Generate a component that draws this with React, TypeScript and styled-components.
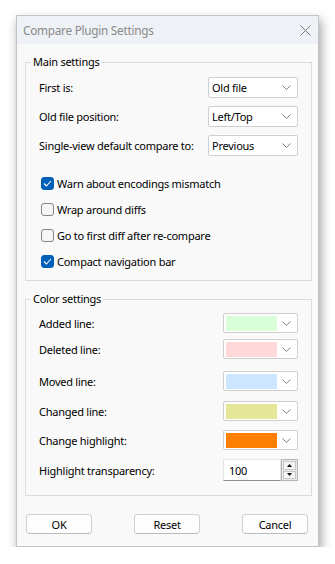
import React from "react";
import styled, { createGlobalStyle } from "styled-components";

const GlobalStyle = createGlobalStyle`
  body {
    margin: 0;
    background: #ffffff;
    font-family: "Segoe UI", "Noto Sans", sans-serif;
    font-size: 11px;
    letter-spacing: -0.25px;
    color: #000000;
  }
`;

const Dialog = styled.div`
  margin: 15px 0 0 16px;
  width: 303px;
  box-sizing: border-box;
  border: 1px solid #c4c4c4;
  background: #f9f9f9;
  box-shadow: 2px 5px 10px rgba(0, 0, 0, 0.38);
  display: flex;
  flex-direction: column;
`;

const TitleBar = styled.div`
  height: 28px;
  background: #eef1f5;
  display: flex;
  align-items: center;
  justify-content: space-between;
  padding: 0 6px 0 6px;
`;

const Title = styled.div`
  color: #8a8a8a;
  font-size: 11.75px;
  margin-top: -1px;
`;

const CloseButton = styled.div`
  width: 12px;
  height: 12px;
  display: flex;
  align-items: center;
  justify-content: center;
  margin-right: 1px;
`;

const Group = styled.fieldset<{ $top: number; $padTop: number; $padBottom: number }>`
  margin: ${(p) => p.$top}px 6px 0 8px;
  padding: ${(p) => p.$padTop}px 13px ${(p) => p.$padBottom}px 13px;
  border: 1px solid #dcdcdc;
  min-width: 0;
`;

const Legend = styled.legend`
  margin-left: -8px;
  padding: 0 2px;
  line-height: 16px;
  font-size: 11px;
`;

const SelectRows = styled.div`
  display: flex;
  flex-direction: column;
  gap: 8px;
`;

const Row = styled.div<{ $gap?: number; $height?: number }>`
  display: flex;
  align-items: center;
  justify-content: space-between;
  height: ${(p) => p.$height ?? 21}px;
  margin-top: ${(p) => p.$gap ?? 0}px;
`;

const Label = styled.span`
  white-space: nowrap;
`;

const Select = styled.div`
  width: 90px;
  height: 21px;
  box-sizing: border-box;
  background: #ffffff;
  border: 1px solid #cfcfcf;
  border-radius: 2px;
  display: flex;
  align-items: center;
  justify-content: space-between;
  padding: 0 6px 0 3px;
`;

const Checks = styled.div`
  display: flex;
  flex-direction: column;
  gap: 6px;
  margin-top: 17px;
`;

const CheckRow = styled.label`
  display: flex;
  align-items: center;
  gap: 3px;
  height: 20px;
  padding-left: 2px;
`;

const Box = styled.span<{ $checked: boolean }>`
  width: 13px;
  height: 13px;
  box-sizing: border-box;
  border-radius: 3px;
  display: flex;
  align-items: center;
  justify-content: center;
  background: ${(p) => (p.$checked ? "#005fb8" : "#f5f5f5")};
  border: 1px solid ${(p) => (p.$checked ? "#005fb8" : "#858585")};
`;

const ColorPicker = styled.div`
  width: 75px;
  height: 20px;
  box-sizing: border-box;
  background: #ffffff;
  border: 1px solid #cfcfcf;
  border-radius: 2px;
  display: flex;
  align-items: center;
  padding: 0 6px 0 2px;
  gap: 5px;
`;

const Swatch = styled.span<{ $color: string }>`
  width: 52px;
  height: 15px;
  background: ${(p) => p.$color};
`;

const Spin = styled.div`
  width: 75px;
  height: 22px;
  display: flex;
`;

const SpinEdit = styled.div`
  flex: 1;
  background: #ffffff;
  border: 1px solid #e6e6e6;
  border-bottom-color: #8f8f8f;
  display: flex;
  align-items: center;
  padding-left: 5px;
`;

const SpinButtons = styled.div`
  width: 17px;
  display: flex;
  flex-direction: column;
  border: 1px solid #b4b4b4;
  box-sizing: border-box;
  background: #e9e9e9;
`;

const SpinButton = styled.div<{ $down?: boolean }>`
  flex: 1;
  display: flex;
  align-items: center;
  justify-content: center;
  background: #f4f4f4;
  margin: 1px;
  margin-top: ${(p) => (p.$down ? 0 : 1)}px;
  border: 1px solid #c8c8c8;
`;

const Buttons = styled.div`
  display: flex;
  justify-content: space-between;
  padding: 18px 10px 12px 9px;
`;

const Button = styled.div`
  width: 66px;
  height: 20px;
  box-sizing: border-box;
  border: 1px solid #d0d0d0;
  border-bottom-color: #bcbcbc;
  border-radius: 4px;
  background: #fdfdfd;
  display: flex;
  align-items: center;
  justify-content: center;
`;

const Chevron = () => (
  <svg width="9" height="5" viewBox="0 0 9 5">
    <path d="M0.5 0.5 L4.5 4.5 L8.5 0.5" fill="none" stroke="#707070" strokeWidth="0.9" />
  </svg>
);

const Tick = () => (
  <svg width="9" height="7" viewBox="0 0 9 7">
    <path d="M1 3.5 L3.4 6 L8 1" fill="none" stroke="#ffffff" strokeWidth="1.1" />
  </svg>
);

const Arrow = ({ down }: { down?: boolean }) => (
  <svg width="5" height="3" viewBox="0 0 5 3">
    <path d={down ? "M0 0 H5 L2.5 3 Z" : "M0 3 H5 L2.5 0 Z"} fill="#111" />
  </svg>
);

const selects = [
  { label: "First is:", value: "Old file" },
  { label: "Old file position:", value: "Left/Top" },
  { label: "Single-view default compare to:", value: "Previous" },
];

const checks = [
  { label: "Warn about encodings mismatch", checked: true },
  { label: "Wrap around diffs", checked: false },
  { label: "Go to first diff after re-compare", checked: false },
  { label: "Compact navigation bar", checked: true },
];

const colors = [
  { label: "Added line:", color: "#d9ffd9", gap: 0 },
  { label: "Deleted line:", color: "#ffd9d9", gap: 6 },
  { label: "Moved line:", color: "#cce6ff", gap: 12 },
  { label: "Changed line:", color: "#e6e699", gap: 10 },
  { label: "Change highlight:", color: "#ff8000", gap: 9 },
];

export default function App() {
  return (
    <>
      <GlobalStyle />
      <Dialog>
        <TitleBar>
          <Title>Compare Plugin Settings</Title>
          <CloseButton>
            <svg width="11" height="11" viewBox="0 0 11 11">
              <path d="M0.5 0.5 L10.5 10.5 M10.5 0.5 L0.5 10.5" stroke="#7a7a7a" strokeWidth="1" />
            </svg>
          </CloseButton>
        </TitleBar>

        <Group $top={10} $padTop={7} $padBottom={9}>
          <Legend>Main settings</Legend>
          <SelectRows>
            {selects.map((s) => (
              <Row key={s.label}>
                <Label>{s.label}</Label>
                <Select>
                  <Label>{s.value}</Label>
                  <Chevron />
                </Select>
              </Row>
            ))}
          </SelectRows>
          <Checks>
            {checks.map((c) => (
              <CheckRow key={c.label}>
                <Box $checked={c.checked}>{c.checked && <Tick />}</Box>
                <Label>{c.label}</Label>
              </CheckRow>
            ))}
          </Checks>
        </Group>

        <Group $top={10} $padTop={6} $padBottom={14}>
          <Legend>Color settings</Legend>
          {colors.map((c) => (
            <Row key={c.label} $gap={c.gap} $height={20}>
              <Label>{c.label}</Label>
              <ColorPicker>
                <Swatch $color={c.color} />
                <Chevron />
              </ColorPicker>
            </Row>
          ))}
          <Row $gap={9} $height={22}>
            <Label>Highlight transparency:</Label>
            <Spin>
              <SpinEdit>100</SpinEdit>
              <SpinButtons>
                <SpinButton>
                  <Arrow />
                </SpinButton>
                <SpinButton $down>
                  <Arrow down />
                </SpinButton>
              </SpinButtons>
            </Spin>
          </Row>
        </Group>

        <Buttons>
          <Button>OK</Button>
          <Button>Reset</Button>
          <Button>Cancel</Button>
        </Buttons>
      </Dialog>
    </>
  );
}
